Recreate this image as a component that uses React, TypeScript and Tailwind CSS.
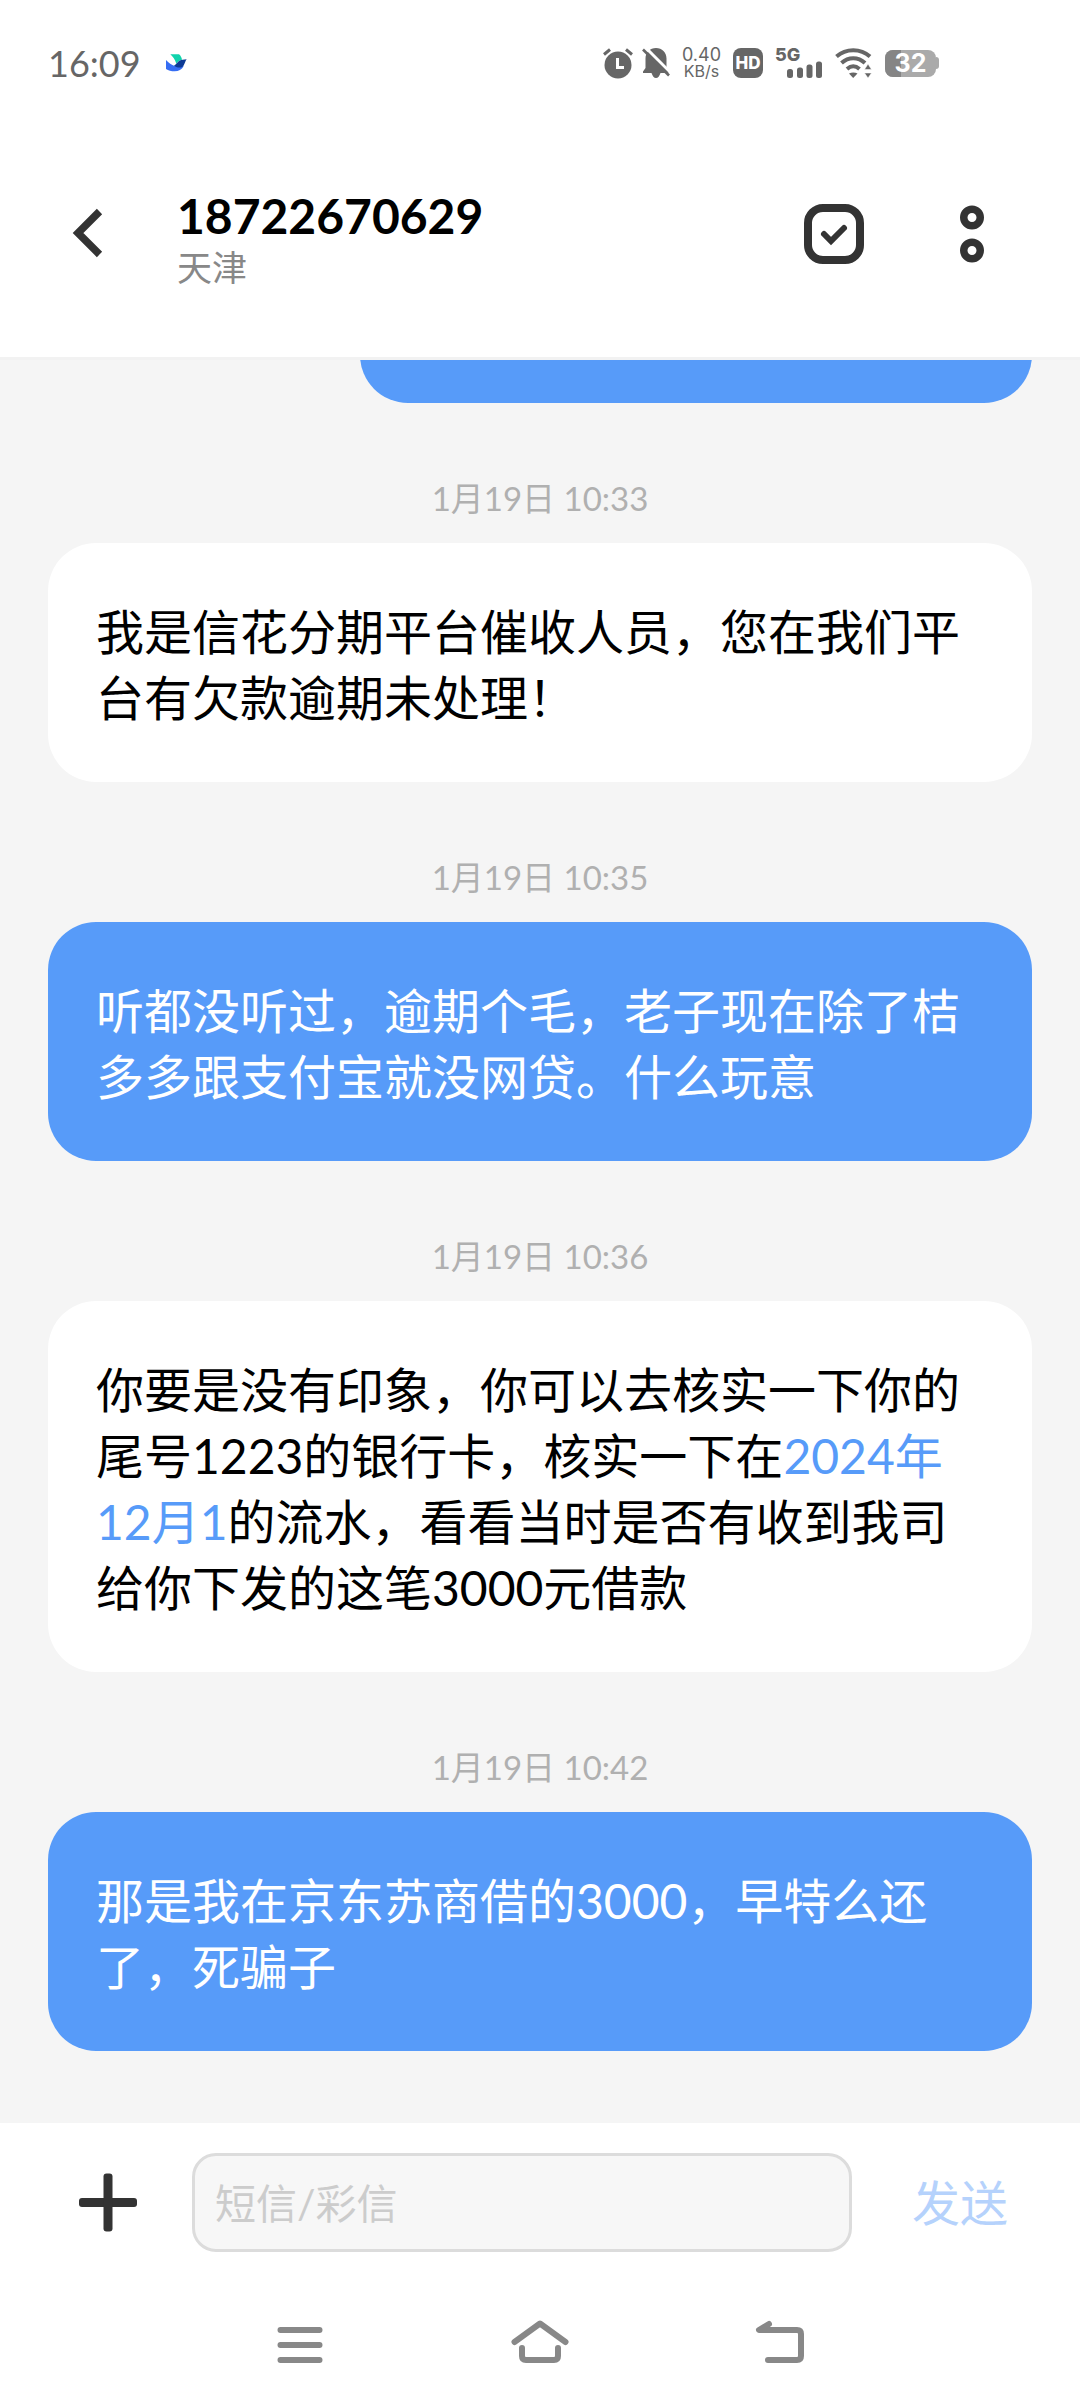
import { useState, type ReactNode } from 'react'

type Message = {
  id: number
  time: string
  mine: boolean
  body: ReactNode
}

const messages: Message[] = [
  {
    id: 1,
    time: '1月19日 10:33',
    mine: false,
    body: '我是信花分期平台催收人员，您在我们平台有欠款逾期未处理！',
  },
  {
    id: 2,
    time: '1月19日 10:35',
    mine: true,
    body: '听都没听过，逾期个毛，老子现在除了桔多多跟支付宝就没网贷。什么玩意',
  },
  {
    id: 3,
    time: '1月19日 10:36',
    mine: false,
    body: (
      <>
        你要是没有印象，你可以去核实一下你的尾号1223的银行卡，核实一下在
        <a href="#date" className="text-[#579bf9]">2024年12月1</a>
        的流水，看看当时是否有收到我司给你下发的这笔3000元借款
      </>
    ),
  },
  {
    id: 4,
    time: '1月19日 10:42',
    mine: true,
    body: '那是我在京东苏商借的3000，早特么还了，死骗子',
  },
]

function BirdLogo() {
  return (
    <svg viewBox="0 0 66 54" className="h-[18px] w-[22px]" aria-hidden="true">
      <path d="M16 1h26c5 4 8 10 9 16-8 1-13 6-17 12C30 17 24 8 16 1Z" fill="#10d3ac" />
      <path d="M3 18c8 9 17 15 26 18 8-1 15-2 27 1-6 10-15 15-27 15-10 0-19-3-26-7Z" fill="#356df3" />
      <path d="M27 35c8-4 13-18 26-18l12-1c-4 5-5 12-10 20-7 8-18 5-28-1Z" fill="#0d3a94" />
    </svg>
  )
}

function AlarmIcon() {
  return (
    <svg viewBox="0 0 32 32" className="size-8" fill="none" aria-hidden="true">
      <circle cx="16" cy="18" r="13.5" fill="#666" />
      <path d="M2 7.5 8 2.5M30 7.5l-6-5" stroke="#666" strokeWidth="3" />
      <path d="M15.5 11v9.500h6.500" stroke="#fff" strokeWidth="3" />
    </svg>
  )
}

function BellOffIcon() {
  return (
    <svg viewBox="0 0 28 32" className="h-8 w-7" fill="none" aria-hidden="true">
      <path d="M14 1c6 0 10.500 4.500 10.500 10.500V21l2 3.500v1.500h-8c-1 3-2.500 5-4.500 5s-3.500-2-4.500-5H1v-1.500L3.500 21v-9.500C3.500 5.500 8 1 14 1Z" fill="#666" />
      <path d="M3 0 30 27" stroke="#fff" strokeWidth="3" />
      <path d="M1 2.500 27 28.500" stroke="#666" strokeWidth="2.600" />
    </svg>
  )
}

function SignalBars() {
  return (
    <svg viewBox="0 0 36 17" className="h-[17px] w-9" fill="#666" aria-hidden="true">
      <rect x="0" y="8" width="6" height="9" rx="2.500" />
      <rect x="10" y="6.500" width="6" height="10.500" rx="2.500" />
      <rect x="19.500" y="3.500" width="6" height="13.500" rx="2.500" />
      <rect x="29" y="0.500" width="6" height="16.500" rx="2.500" />
    </svg>
  )
}

function WifiIcon() {
  return (
    <svg viewBox="0 0 38 30" className="h-[30px] w-[38px]" fill="none" aria-hidden="true">
      <path d="M1.500 8.500C11 0 25.500 0 35 8.500M6.500 15c7-6.500 16.500-6.500 23.500 0M12 21c4-3.500 8.500-3.500 12.500 0" stroke="#666" strokeWidth="4" />
      <path d="M14 25.500c2.500-1.500 6-1.500 8.500 0L18.200 30Z" fill="#666" />
      <path d="m33 16 3.500 5.500h-7ZM33 30l-3.500-5h7Z" fill="#666" stroke="#fff" strokeWidth="0.500" />
    </svg>
  )
}

function Battery({ level }: { level: number }) {
  return (
    <div className="flex items-center">
      <div className="relative flex h-[27px] w-[51px] items-center justify-center rounded-lg bg-[#aaa]">
        <div className="absolute inset-y-0 left-0 rounded-l-lg bg-[#858585]" style={{ width: `${level}%` }} />
        <span className="relative font-[Inter] text-[25px] leading-[27px] font-bold text-white">{level}</span>
      </div>
      <div className="h-3 w-[3px] rounded-r-sm bg-[#aaa]" />
    </div>
  )
}

function StatusBar() {
  return (
    <div className="flex h-[126px] items-center justify-between pr-[141px] pl-12 text-[#666]">
      <div className="flex items-center gap-6">
        <span className="text-[36px] leading-9">16:09</span>
        <BirdLogo />
      </div>
      <div className="flex items-center gap-3">
        <div className="flex items-center gap-2">
          <AlarmIcon />
          <BellOffIcon />
        </div>
        <div className="flex flex-col items-center font-[Inter] leading-4">
          <span className="text-[18px]">0.40</span>
          <span className="text-[16px]">KB/s</span>
        </div>
        <div className="flex size-[30px] items-center justify-center rounded-lg bg-[#666] font-[Inter] text-[17px] leading-none font-extrabold text-white">
          HD
        </div>
        <div className="flex h-[30px] flex-col items-end">
          <span className="mr-auto font-[Inter] text-[18px] leading-[13px] font-extrabold">5G</span>
          <div className="pl-3">
            <SignalBars />
          </div>
        </div>
        <WifiIcon />
        <Battery level={32} />
      </div>
    </div>
  )
}

function Header() {
  return (
    <header className="border-b-[3px] border-[#f2f2f2] bg-white">
      <StatusBar />
      <div className="flex h-[231px] items-start pt-[60px] pr-[78px] pl-[66px]">
        <button type="button" aria-label="返回" className="mt-[18px] mr-[66px]">
          <svg viewBox="0 0 45 60" className="h-[60px] w-[45px]" fill="none" aria-hidden="true">
            <path d="M33.500 7.500 12 29l21.500 21.500" stroke="#333" strokeWidth="7.500" />
          </svg>
        </button>
        <div className="flex-1">
          <h1 className="text-[48px] leading-[60px] font-bold text-black">18722670629</h1>
          <p className="text-[35px] leading-[42px] text-[#888]">天津</p>
        </div>
        <div className="mt-[18px] flex items-center gap-[78px]">
          <button type="button" aria-label="选择">
            <svg viewBox="0 0 60 60" className="size-[60px]" fill="none" aria-hidden="true">
              <rect x="4" y="4" width="52" height="52" rx="15" stroke="#333" strokeWidth="8" />
              <path d="m20 30 7 7 13-13" stroke="#333" strokeWidth="6" strokeLinecap="round" />
            </svg>
          </button>
          <button type="button" aria-label="更多">
            <svg viewBox="0 0 60 60" className="size-[60px]" fill="none" aria-hidden="true">
              <circle cx="30" cy="13.500" r="8.250" stroke="#333" strokeWidth="7.500" />
              <circle cx="30" cy="46.500" r="8.250" stroke="#333" strokeWidth="7.500" />
            </svg>
          </button>
        </div>
      </div>
    </header>
  )
}

function Bubble({ message }: { message: Message }) {
  const tone = message.mine ? 'bg-[#579bf9] text-white' : 'bg-white text-black'
  return (
    <li className="flex flex-col">
      <time className="pt-[71px] pb-[21px] text-center text-[33px] leading-[48px] text-[#b0b0b0]">{message.time}</time>
      <p className={`rounded-[48px] px-12 pt-14 pb-[51px] text-[48px] leading-[66px] ${tone}`}>{message.body}</p>
    </li>
  )
}

function Composer() {
  const [text, setText] = useState('')
  return (
    <form className="flex items-center gap-[54px] pt-[30px] pr-[66px] pl-[78px]" onSubmit={(e) => e.preventDefault()}>
      <button type="button" aria-label="添加">
        <svg viewBox="0 0 60 60" className="size-[60px]" fill="#333" aria-hidden="true">
          <rect x="1" y="25" width="58" height="9" rx="3" />
          <rect x="25.500" y="0.500" width="9" height="58" rx="3" />
        </svg>
      </button>
      <input
        type="text"
        aria-label="短信/彩信"
        placeholder="短信/彩信"
        value={text}
        onChange={(e) => setText(e.target.value)}
        className="h-[99px] min-w-0 flex-1 rounded-3xl border-[3px] border-[#dcdcdc] bg-[#f7f7f7] px-5 pt-[2px] text-[41px] text-black outline-none placeholder:text-[#ccc]"
      />
      <button type="submit" className="px-[6px] text-[48px] leading-[66px] text-[#b5d2fc]">
        发送
      </button>
    </form>
  )
}

function SystemNav() {
  return (
    <nav className="flex justify-center gap-[180px] pt-[60px] pb-9">
      <button type="button" aria-label="最近任务">
        <svg viewBox="0 0 60 60" className="size-[60px]" fill="none" stroke="#888" strokeWidth="6" strokeLinecap="round" aria-hidden="true">
          <path d="M10.500 18h39M10.500 33h39M10.500 48h39" />
        </svg>
      </button>
      <button type="button" aria-label="主屏幕">
        <svg viewBox="0 0 60 60" className="size-[60px]" fill="none" stroke="#888" strokeWidth="6" strokeLinecap="round" strokeLinejoin="round" aria-hidden="true">
          <path d="M4.500 30 30 11.500 55.500 30" />
          <path d="M12 36v8q0 4 4 4h28q4 0 4-4v-8" />
        </svg>
      </button>
      <button type="button" aria-label="返回上一级">
        <svg viewBox="0 0 60 60" className="size-[60px]" fill="none" stroke="#888" strokeWidth="6" strokeLinecap="round" strokeLinejoin="round" aria-hidden="true">
          <path d="M19 12 9 18h38q4 0 4 4v22q0 4-4 4H18" />
        </svg>
      </button>
    </nav>
  )
}

export default function App() {
  return (
    <div className="flex min-h-screen flex-col bg-[#f5f5f5] font-[Lato,'Noto_Sans_CJK_SC',sans-serif]" lang="zh-CN">
      <Header />
      <main className="flex-1 px-12 pb-[72px]">
        {/* tail of the previous message, scrolled under the header */}
        <div className="flex h-[43px] items-end justify-end overflow-hidden">
          <div className="h-[120px] w-[672px] shrink-0 rounded-[48px] bg-[#579bf9]" />
        </div>
        <ol>
          {messages.map((m) => (
            <Bubble key={m.id} message={m} />
          ))}
        </ol>
      </main>
      <footer className="bg-white">
        <Composer />
        <SystemNav />
      </footer>
    </div>
  )
}
